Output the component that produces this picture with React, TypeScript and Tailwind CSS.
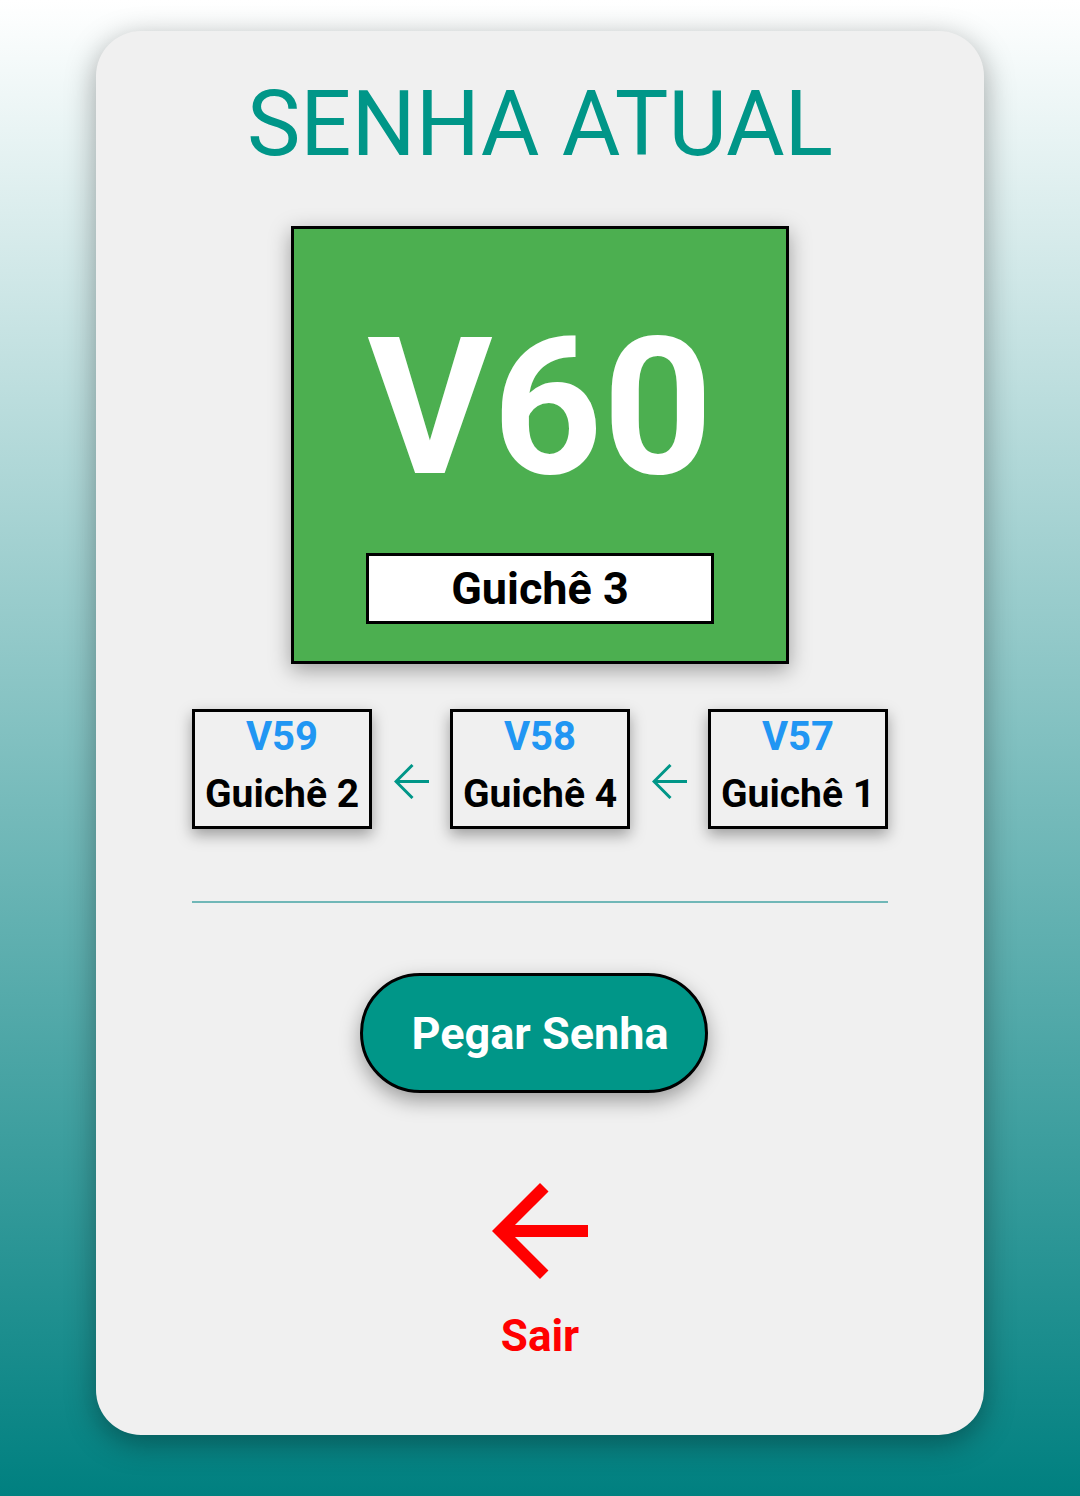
import React from "react";

const history = [
  { code: "V59", desk: "Guichê 2" },
  { code: "V58", desk: "Guichê 4" },
  { code: "V57", desk: "Guichê 1" },
];

function SmallArrow() {
  return (
    <svg width="35" height="35" viewBox="0 0 35 35" className="mt-[55px] shrink-0">
      <path d="M35 17.5H2M18.5 1L2 17.5 18.5 34" fill="none" stroke="#009688" strokeWidth="3" />
    </svg>
  );
}

function BackArrow() {
  return (
    <svg width="144" height="144" viewBox="0 0 24 24">
      <path fill="#ff0000" d="M20 11H7.83l5.59-5.59L12 4l-8 8 8 8 1.41-1.41L7.83 13H20v-2z" />
    </svg>
  );
}

export default function App() {
  return (
    <div
      className="min-h-screen w-full flex justify-center pt-[31px] bg-[linear-gradient(to_bottom,#ffffff,#008080)]"
      style={{ fontFamily: "Roboto, 'Noto Sans', sans-serif" }}
    >
      <div className="w-[888px] h-[1404px] bg-[#f0f0f0] rounded-[45px] shadow-[0_8px_30px_rgba(0,0,0,0.35)] flex flex-col items-center pt-[49px]">
        <h1 className="text-[90px] leading-none font-normal text-[#009688]">SENHA ATUAL</h1>

        <div className="mt-[56px] w-[498px] h-[438px] bg-[#4caf50] border-[3px] border-black shadow-[0_6px_20px_rgba(0,0,0,0.35)] flex flex-col items-center pt-[83px]">
          <div className="text-[192px] leading-none font-bold text-white">V60</div>
          <div className="mt-[49px] w-[348px] h-[71px] bg-white border-[3px] border-black flex items-center justify-center">
            <span className="text-[45px] leading-none font-bold text-black">Guichê 3</span>
          </div>
        </div>

        <div className="mt-[45px] w-[696px] flex justify-between">
          {history.map((h, i) => (
            <React.Fragment key={h.code}>
              {i > 0 && <SmallArrow />}
              <div className="w-[180px] h-[120px] border-[3px] border-black bg-[#f0f0f0] shadow-[0_6px_14px_rgba(0,0,0,0.35)] flex flex-col items-center pt-[5px]">
                <div className="text-[40px] leading-none font-bold text-[#2196f3]">{h.code}</div>
                <div className="mt-[18px] text-[39px] leading-none font-bold text-black whitespace-nowrap">{h.desk}</div>
              </div>
            </React.Fragment>
          ))}
        </div>

        <div className="mt-[72px] w-[696px] h-[2px] bg-[#70b7b7]" />

        <button className="mt-[70px] mr-[12px] w-[348px] h-[120px] pl-[12px] rounded-full bg-[#009688] border-[3px] border-black shadow-[0_8px_20px_rgba(0,0,0,0.35)] flex items-center justify-center">
          <span className="text-[45px] leading-none font-bold text-white">Pegar Senha</span>
        </button>

        <div className="mt-[66px] flex flex-col items-center">
          <BackArrow />
          <span className="mt-[11px] text-[44px] leading-none font-bold text-[#ff0000]">Sair</span>
        </div>
      </div>
    </div>
  );
}
